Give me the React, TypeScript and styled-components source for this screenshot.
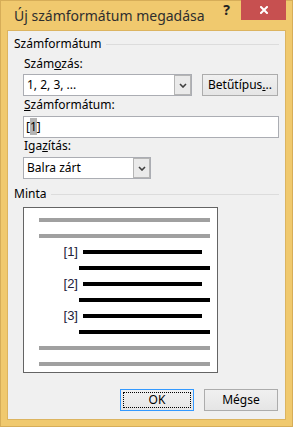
import React from 'react';
import styled, { createGlobalStyle } from 'styled-components';

const UI = `"Noto Sans", "Open Sans", "DejaVu Sans", sans-serif`;

const GlobalStyle = createGlobalStyle`
  html, body { margin: 0; padding: 0; background: #f0c96e; }
  * { box-sizing: border-box; }
`;

const Window = styled.div`
  width: 293px;
  height: 427px;
  background: #f0c96e;
  border: 1px solid #d6ad58;
  padding: 0 6px 6px 6px;
  display: flex;
  flex-direction: column;
  font-family: ${UI};
`;

const TitleBar = styled.div`
  height: 29px;
  display: flex;
  align-items: flex-start;
`;

const Title = styled.div`
  flex: 1;
  min-width: 0;
  padding: 5px 0 0 7px;
  font-size: 14px;
  line-height: 20px;
  white-space: nowrap;
  color: #2e2e2e;
`;

const HelpButton = styled.div`
  width: 29px;
  height: 20px;
  margin-top: -1px;
  font: bold 14px/20px ${UI};
  color: #222;
  text-align: center;
`;

const CloseButton = styled.div`
  width: 45px;
  height: 20px;
  margin-top: -1px;
  background: #c75050;
  display: flex;
  align-items: center;
  justify-content: center;
`;

const Client = styled.div`
  flex: 1;
  background: #f0f0f0;
  border: 1px solid #dcb460;
  display: flex;
  flex-direction: column;
  padding: 5px 6px 0 6px;
  font-size: 12px;
  color: #000;
`;

const GroupHeader = styled.div<{ $top?: number }>`
  display: flex;
  align-items: center;
  height: 16px;
  line-height: 16px;
  margin-top: ${p => p.$top ?? 0}px;
`;

const GroupLine = styled.div`
  flex: 1;
  height: 1px;
  margin: 1px 0 0 5px;
  background: #dcdcdc;
`;

const Section = styled.div<{ $top?: number }>`
  padding-left: 9px;
  margin-top: ${p => p.$top ?? 0}px;
  display: flex;
  flex-direction: column;
`;

const FieldLabel = styled.div<{ $top?: number }>`
  line-height: 16px;
  height: 16px;
  padding-left: 1px;
  margin-top: ${p => p.$top ?? 0}px;
`;

const Acc = styled.span`
  text-decoration: underline;
`;

const Row = styled.div<{ $top?: number }>`
  display: flex;
  gap: 10px;
  margin-top: ${p => p.$top ?? 0}px;
`;

const Combo = styled.div<{ $w: number }>`
  width: ${p => p.$w}px;
  height: 22px;
  display: flex;
  border: 1px solid #abadb3;
  background: #fff;
`;

const ComboText = styled.div`
  flex: 1;
  padding-left: 3px;
  line-height: 20px;
`;

const ComboArrow = styled.div`
  width: 17px;
  border: 1px solid #b5b5b5;
  background: #eaeaea;
  display: flex;
  align-items: center;
  justify-content: center;
`;

const Button = styled.div<{ $w: number; $default?: boolean }>`
  width: ${p => p.$w}px;
  height: 22px;
  border: 1px solid ${p => (p.$default ? '#3399ff' : '#acacac')};
  background: linear-gradient(#f0f0f0, #e5e5e5);
  display: flex;
  align-items: center;
  justify-content: center;
  line-height: 20px;
  outline: ${p => (p.$default ? '1px dotted #000' : 'none')};
  outline-offset: -4px;
`;

const TextBox = styled.div`
  width: 256px;
  height: 22px;
  border: 1px solid #abadb3;
  background: #fff;
  padding-left: 2px;
  line-height: 20px;
`;

const Sel = styled.span`
  background: #b4b4b4;
`;

const Preview = styled.div`
  width: 195px;
  height: 166px;
  border: 1px solid #646464;
  background: #fff;
  padding: 10px 7px 0 15px;
  display: flex;
  flex-direction: column;
  gap: 12px;
`;

const Bar = styled.div<{ $tone: 'gray' | 'black'; $indent?: number }>`
  height: 4px;
  margin-left: ${p => p.$indent ?? 0}px;
  background: ${p => (p.$tone === 'gray' ? '#a0a0a0' : '#000')};
`;

const NumRow = styled.div`
  height: 4px;
  display: flex;
  align-items: center;
`;

const NumLabel = styled.div`
  width: 44px;
  padding-right: 5px;
  text-align: right;
  font: 13px/4px "Liberation Sans", Arial, sans-serif;
  color: #20203a;
`;

const NumBar = styled.div`
  flex: 1;
  height: 4px;
  margin-right: 8px;
  background: #000;
`;

const Footer = styled.div`
  display: flex;
  justify-content: flex-end;
  gap: 10px;
  padding-right: 1px;
  margin-top: 16px;
`;

const Chevron = () => (
  <svg width="8" height="5" viewBox="0 0 8 5">
    <path d="M1 1 L4 4 L7 1" fill="none" stroke="#404040" strokeWidth="1.6" />
  </svg>
);

const CloseIcon = () => (
  <svg width="8" height="8" viewBox="0 0 8 8">
    <path d="M1 1 L7 7 M7 1 L1 7" stroke="#fff" strokeWidth="2" strokeLinecap="square" />
  </svg>
);

export default function App() {
  const items = ['[1]', '[2]', '[3]'];
  return (
    <>
      <GlobalStyle />
      <Window>
        <TitleBar>
          <Title>Új számformátum megadása</Title>
          <HelpButton>?</HelpButton>
          <CloseButton>
            <CloseIcon />
          </CloseButton>
        </TitleBar>
        <Client>
          <GroupHeader>
            Számformátum
            <GroupLine />
          </GroupHeader>
          <Section>
            <FieldLabel $top={4}>
              Szám<Acc>o</Acc>zás:
            </FieldLabel>
            <Row $top={2}>
              <Combo $w={169}>
                <ComboText>1, 2, 3, ...</ComboText>
                <ComboArrow>
                  <Chevron />
                </ComboArrow>
              </Combo>
              <Button $w={76}>
                Betűtípus<Acc>.</Acc>..
              </Button>
            </Row>
            <FieldLabel $top={1}>
              <Acc>S</Acc>zámformátum:
            </FieldLabel>
            <Row $top={3}>
              <TextBox>
                [<Sel>1</Sel>]
              </TextBox>
            </Row>
            <FieldLabel $top={0}>
              Iga<Acc>z</Acc>ítás:
            </FieldLabel>
            <Row $top={3}>
              <Combo $w={128}>
                <ComboText>Balra zárt</ComboText>
                <ComboArrow>
                  <Chevron />
                </ComboArrow>
              </Combo>
            </Row>
          </Section>
          <GroupHeader $top={7}>
            Minta
            <GroupLine />
          </GroupHeader>
          <Section $top={5}>
            <Preview>
              <Bar $tone="gray" />
              <Bar $tone="gray" />
              {items.map(n => (
                <React.Fragment key={n}>
                  <NumRow>
                    <NumLabel>{n}</NumLabel>
                    <NumBar />
                  </NumRow>
                  <Bar $tone="black" $indent={40} />
                </React.Fragment>
              ))}
              <Bar $tone="gray" />
              <Bar $tone="gray" />
            </Preview>
          </Section>
          <Footer>
            <Button $w={74} $default>
              OK
            </Button>
            <Button $w={74}>Mégse</Button>
          </Footer>
        </Client>
      </Window>
    </>
  );
}
